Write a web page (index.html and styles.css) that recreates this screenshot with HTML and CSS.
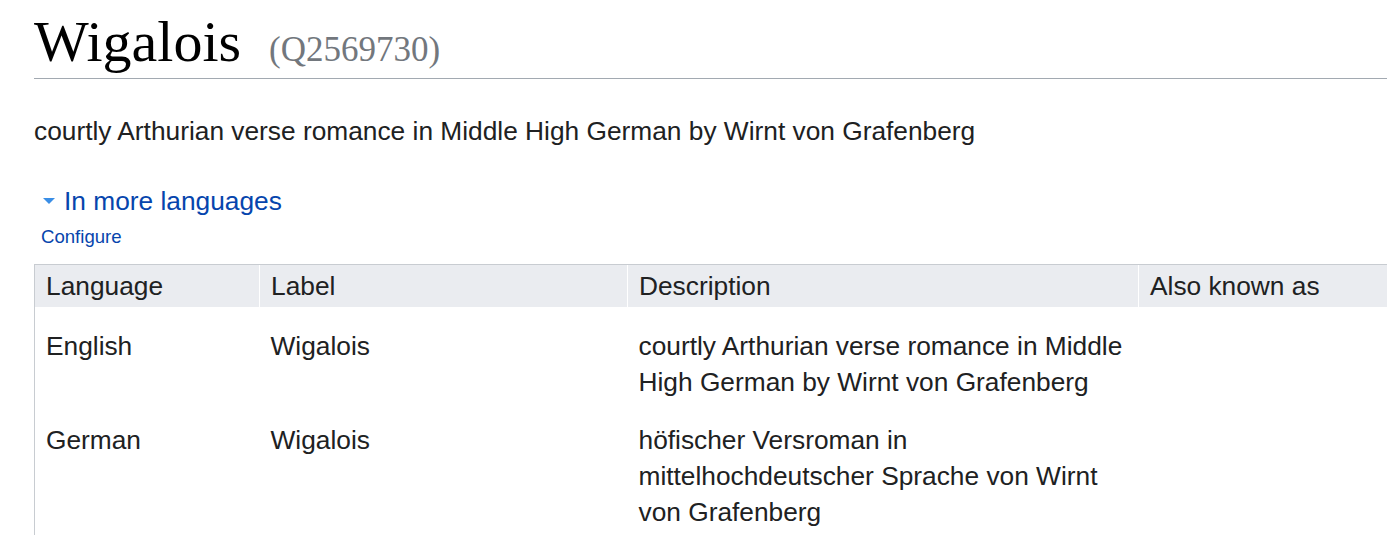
FILE: index.html
```html
<!DOCTYPE html>
<html lang="en">
<head>
<meta charset="utf-8">
<title>Wigalois (Q2569730)</title>
<link rel="stylesheet" href="styles.css">
</head>
<body>
<div class="page">
  <h1 class="title"><span class="label">Wigalois</span><span class="qid">(Q2569730)</span></h1>
  <p class="desc">courtly Arthurian verse romance in Middle High German by Wirnt von Grafenberg</p>
  <div class="toggle"><span class="arrow"></span><a class="link" href="#">In more languages</a></div>
  <div class="configure"><a class="link" href="#">Configure</a></div>
  <table class="terms">
    <colgroup>
      <col class="c1"><col class="c2"><col class="c3"><col class="c4">
    </colgroup>
    <thead>
      <tr><th>Language</th><th>Label</th><th>Description</th><th>Also known as</th></tr>
    </thead>
    <tbody>
      <tr class="first"><td>English</td><td>Wigalois</td><td>courtly Arthurian verse romance in Middle High German by Wirnt von Grafenberg</td><td></td></tr>
      <tr><td>German</td><td>Wigalois</td><td>höfischer Versroman in mittelhochdeutscher Sprache von Wirnt von Grafenberg</td><td></td></tr>
    </tbody>
  </table>
</div>
</body>
</html>
```
FILE: styles.css
```css
html, body {
  margin: 0;
  padding: 0;
  background: #fff;
  overflow: hidden;
}
body {
  font-family: "Liberation Sans", Arial, sans-serif;
  color: #202122;
}
.page {
  padding-left: 34px;
  width: 1353px;
  overflow: hidden;
}
.title {
  margin: 0;
  padding: 8px 0 2px;
  border-bottom: 1px solid #a2a9b1;
  font-family: "Liberation Serif", Georgia, serif;
  font-weight: normal;
  font-size: 58px;
  line-height: 68px;
  height: 68px;
  color: #000;
}
.qid {
  font-size: 35px;
  line-height: 30px;
  color: #72777d;
  margin-left: 28px;
}
.desc {
  margin: 34px 0 0;
  font-size: 26.3px;
  line-height: 36px;
}
.toggle {
  margin-top: 34px;
  display: flex;
  align-items: center;
  font-size: 26.3px;
  line-height: 36px;
}
.arrow {
  width: 0;
  height: 0;
  border-left: 6px solid transparent;
  border-right: 6px solid transparent;
  border-top: 6px solid #3a8ee6;
  margin-left: 9px;
  margin-right: 9px;
}
.link {
  color: #0645ad;
  text-decoration: none;
}
.configure {
  margin-top: 6px;
  margin-left: 7px;
  font-size: 18.6px;
  line-height: 24px;
}
.terms {
  margin-top: 15px;
  border-collapse: collapse;
  table-layout: fixed;
  width: 1400px;
  font-size: 26.3px;
  line-height: 36px;
}
.c1 { width: 225px; }
.c2 { width: 368px; }
.c3 { width: 511px; }
.c4 { width: 296px; }
.terms th {
  background: #eaecf0;
  font-weight: normal;
  text-align: left;
  padding: 3px 11px 3px;
  height: 36px;
  border-top: 1px solid #c8ccd1;
  border-left: 1px solid #fff;
}
.terms th:first-child {
  border-left: 1px solid #c8ccd1;
}
.terms td {
  vertical-align: top;
  padding: 11px 11px;
}
.terms td:first-child {
  border-left: 1px solid #c8ccd1;
}
.terms tr.first td {
  padding-top: 21px;
}
```
